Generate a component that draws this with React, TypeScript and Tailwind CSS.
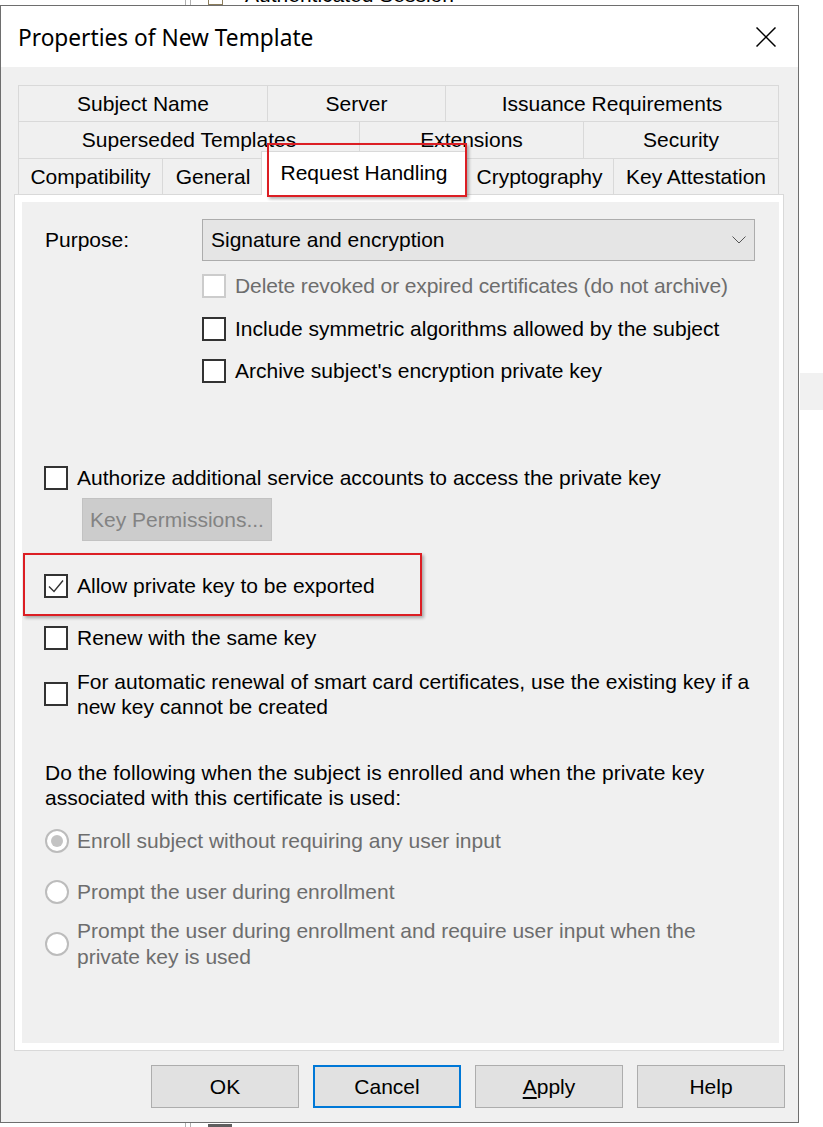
import React from 'react';

type Tab = { label: string; w: number; selected?: boolean };

const tabRows: { h: number; tabs: Tab[] }[] = [
  {
    h: 36,
    tabs: [
      { label: 'Subject Name', w: 249 },
      { label: 'Server', w: 178 },
      { label: 'Issuance Requirements', w: 334 },
    ],
  },
  {
    h: 37,
    tabs: [
      { label: 'Superseded Templates', w: 341 },
      { label: 'Extensions', w: 224 },
      { label: 'Security', w: 196 },
    ],
  },
  {
    h: 36,
    tabs: [
      { label: 'Compatibility', w: 144 },
      { label: 'General', w: 101 },
      { label: 'Request Handling', w: 206, selected: true },
      { label: 'Cryptography', w: 148 },
      { label: 'Key Attestation', w: 166 },
    ],
  },
];

function CheckBox({ checked = false, disabled = false }: { checked?: boolean; disabled?: boolean }) {
  return (
    <div
      className={`w-[24px] h-[24px] shrink-0 bg-white border-2 flex items-center justify-center ${
        disabled ? 'border-[#cccccc]' : 'border-[#333333]'
      }`}
    >
      {checked && (
        <svg width="20" height="20" viewBox="0 0 20 20" fill="none">
          <polyline points="3,10.5 8,15.5 17,4.5" stroke="#333" strokeWidth="1.4" />
        </svg>
      )}
    </div>
  );
}

function Radio({ checked = false }: { checked?: boolean }) {
  return (
    <div className="w-[24px] h-[24px] shrink-0 rounded-full bg-white border-2 border-[#bcbcbc] flex items-center justify-center">
      {checked && <div className="w-[12px] h-[12px] rounded-full bg-[#c3c3c3]" />}
    </div>
  );
}

function DialogButton({ children, focused = false }: { children: React.ReactNode; focused?: boolean }) {
  return (
    <div
      className={`w-[148px] h-[43px] bg-[#e1e1e1] flex items-center justify-center text-black ${
        focused ? 'border-2 border-[#0078d7]' : 'border border-[#adadad]'
      }`}
    >
      {children}
    </div>
  );
}

export default function App() {
  return (
    <div className="relative w-[823px] h-[1127px] bg-white overflow-hidden font-['Liberation_Sans',Arial,sans-serif] text-[21px] leading-[24px] text-black">
      {/* window behind the dialog */}
      <div className="absolute left-[185px] top-0 w-px h-[5px] bg-[#b0b0b0]" />
      <div className="absolute left-[190px] top-0 w-px h-[5px] bg-[#b0b0b0]" />
      <div className="absolute left-[208px] top-[-10px] w-[15px] h-[15px] border border-[#8c7d5c]" />
      <div className="absolute left-[245px] top-[-17px] text-black">Authenticated Session</div>
      <div className="absolute left-[185px] top-[1123px] w-px h-[4px] bg-[#b0b0b0]" />
      <div className="absolute left-[190px] top-[1123px] w-px h-[4px] bg-[#b0b0b0]" />
      <div className="absolute left-[208px] top-[1124px] w-[24px] h-[4px] bg-[#5f5f5f]" />
      <div className="absolute left-[800px] top-[373px] w-[23px] h-[37px] bg-[#f1f1f1]" />

      {/* Dialog */}
      <div className="mt-[5px] w-[799px] h-[1118px] border border-[#6e6e6e] bg-[#f0f0f0] flex flex-col relative">
        {/* Title bar */}
        <div className="h-[61px] bg-white flex items-center justify-between pl-[17px] pr-[22px]">
          <span className="font-['Noto_Sans',sans-serif] text-[22.7px] mt-[2px]">Properties of New Template</span>
          <svg width="20" height="20" viewBox="0 0 20 20" className="mt-[1px]">
            <line x1="0.5" y1="0.5" x2="19.5" y2="19.5" stroke="#000" strokeWidth="1.5" />
            <line x1="19.5" y1="0.5" x2="0.5" y2="19.5" stroke="#000" strokeWidth="1.5" />
          </svg>
        </div>

        {/* Body */}
        <div className="flex-1 pt-[18px] pl-[13px]">
          {/* Tabs */}
          <div className="ml-[4px] w-[761px]">
            {tabRows.map((row, i) => (
              <div key={i} className="flex" style={{ height: row.h }}>
                {row.tabs.map((tab, j) =>
                  tab.selected ? (
                    <div
                      key={tab.label}
                      className="relative z-10 -mx-[2px] -mt-[7px] h-[44px] bg-white border-x border-t border-[#d9d9d9] flex items-center justify-center pb-[2px]"
                      style={{ width: tab.w }}
                    >
                      {tab.label}
                    </div>
                  ) : (
                    <div
                      key={tab.label}
                      className={`h-full border-l border-t border-[#d9d9d9] flex items-center justify-center ${
                        j === row.tabs.length - 1 ? 'border-r' : ''
                      }`}
                      style={{ width: tab.w }}
                    >
                      {tab.label}
                    </div>
                  )
                )}
              </div>
            ))}
          </div>

          {/* Tab page */}
          <div className="w-[770px] h-[857px] bg-white border border-[#d9d9d9] pt-[7px] pl-[7px] pr-[4px] pb-[7px]">
            <div className="w-[757px] h-[841px] bg-[#f0f0f0] flex flex-col">
              {/* Purpose */}
              <div className="mt-[17px] h-[42px] flex items-center">
                <div className="w-[180px] pl-[23px]">Purpose:</div>
                <div className="w-[553px] h-[42px] bg-[#e5e5e5] border border-[#acacac] flex items-center justify-between pl-[8px] pr-[8px]">
                  <span>Signature and encryption</span>
                  <svg width="14" height="8" viewBox="0 0 14 8" fill="none">
                    <polyline points="0.5,0.5 7,7 13.5,0.5" stroke="#555" strokeWidth="1" />
                  </svg>
                </div>
              </div>

              <div className="mt-[13px] ml-[180px] h-[24px] flex items-center gap-[9px]">
                <CheckBox disabled />
                <span className="text-[#6d6d6d] tracking-[-0.1px]">Delete revoked or expired certificates (do not archive)</span>
              </div>
              <div className="mt-[19px] ml-[180px] h-[24px] flex items-center gap-[9px]">
                <CheckBox />
                <span>Include symmetric algorithms allowed by the subject</span>
              </div>
              <div className="mt-[18px] ml-[180px] h-[24px] flex items-center gap-[9px]">
                <CheckBox />
                <span>Archive subject's encryption private key</span>
              </div>

              <div className="mt-[83px] ml-[22px] h-[24px] flex items-center gap-[9px]">
                <CheckBox />
                <span>Authorize additional service accounts to access the private key</span>
              </div>
              <div className="mt-[8px] ml-[60px] w-[190px] h-[43px] bg-[#cccccc] border border-[#c2c2c2] flex items-center justify-center text-[#838383]">
                Key Permissions...
              </div>

              <div className="mt-[33px] ml-[22px] h-[24px] flex items-center gap-[9px]">
                <CheckBox checked />
                <span>Allow private key to be exported</span>
              </div>
              <div className="mt-[28px] ml-[22px] h-[24px] flex items-center gap-[9px]">
                <CheckBox />
                <span>Renew with the same key</span>
              </div>
              <div className="mt-[19px] ml-[22px] flex items-center gap-[9px]">
                <CheckBox />
                <span className="leading-[25px]">
                  For automatic renewal of smart card certificates, use the existing key if a
                  <br />
                  new key cannot be created
                </span>
              </div>

              <div className="mt-[41px] ml-[23px] leading-[25px]">
                <span className="tracking-[0.08px]">Do the following when the subject is enrolled and when the private key</span>
                <br />
                associated with this certificate is used:
              </div>

              <div className="mt-[19px] ml-[23px] h-[24px] flex items-center gap-[8px] text-[#6d6d6d]">
                <Radio checked />
                <span>Enroll subject without requiring any user input</span>
              </div>
              <div className="mt-[27px] ml-[23px] h-[24px] flex items-center gap-[8px] text-[#6d6d6d]">
                <Radio />
                <span>Prompt the user during enrollment</span>
              </div>
              <div className="mt-[14px] ml-[23px] flex items-center gap-[8px] text-[#6d6d6d]">
                <Radio />
                <span className="leading-[26px]">
                  Prompt the user during enrollment and require user input when the
                  <br />
                  private key is used
                </span>
              </div>
            </div>
          </div>

          {/* Buttons */}
          <div className="mt-[14px] w-[771px] flex justify-end gap-[14px]">
            <DialogButton>OK</DialogButton>
            <DialogButton focused>Cancel</DialogButton>
            <DialogButton>
              <span>
                <span className="underline underline-offset-[3px]">A</span>pply
              </span>
            </DialogButton>
            <DialogButton>Help</DialogButton>
          </div>
        </div>
      </div>

      {/* annotation boxes */}
      <div className="absolute left-[267px] top-[143px] w-[200px] h-[54px] border-2 border-[#dc1e24] shadow-[2px_2px_3px_rgba(0,0,0,0.3)] z-20" />
      <div className="absolute left-[23px] top-[553px] w-[399px] h-[63px] border-2 border-[#dc1e24] shadow-[2px_2px_3px_rgba(0,0,0,0.3)] z-20" />
    </div>
  );
}
